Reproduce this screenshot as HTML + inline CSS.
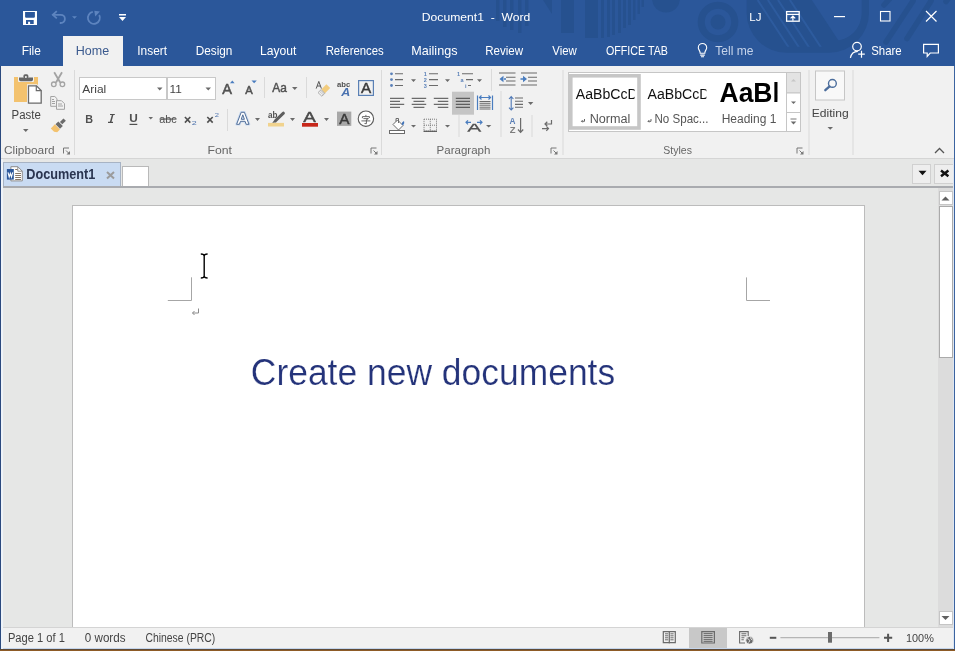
<!DOCTYPE html>
<html><head><meta charset="utf-8">
<style>
*{margin:0;padding:0;box-sizing:border-box}
html,body{width:955px;height:651px;overflow:hidden;background:#e6e7e6;font-family:"Liberation Sans",sans-serif}
.a{position:absolute}
svg text{font-family:"Liberation Sans",sans-serif;white-space:pre}

</style></head><body>
<div class="a" style="left:0;top:0;width:955px;height:66px;background:#2b579a;overflow:hidden">
<svg class="a" style="left:0;top:0" width="955" height="66">
    <g fill="#26518f">
      <rect x="496" y="0" width="3.5" height="21"/>
      <rect x="503" y="0" width="3.5" height="27"/>
      <rect x="510" y="0" width="3.5" height="30"/>
      <rect x="518" y="0" width="3.5" height="33"/>
      <rect x="525" y="0" width="3.5" height="26"/>
      <polygon points="543,0 552,0 552,14"/>
      <rect x="561" y="0" width="13" height="33"/>
      <rect x="585" y="0" width="13" height="38"/>
      <rect x="601" y="0" width="3" height="38"/>
      <rect x="607" y="0" width="3" height="37"/>
      <rect x="612" y="0" width="3" height="35"/>
      <rect x="618" y="0" width="3" height="33"/>
      <rect x="623" y="0" width="3" height="28"/>
      <rect x="628" y="0" width="3" height="25"/>
      <rect x="633" y="0" width="2.5" height="20"/>
      <rect x="637.5" y="0" width="2.5" height="14"/>
      <rect x="641.5" y="0" width="2.5" height="7"/>
      <circle cx="666" cy="-1.5" r="14"/>
      <path fill-rule="evenodd" d="M718,1.7a20.3,20.3 0 1,0 0.01,0z M718,8.7a13.3,13.3 0 1,1 -0.01,0z"/>
      <circle cx="718" cy="22" r="7.5"/>
      <g clip-path="url(#top0)">
        <path d="M746.6,0 V12.8 A40,40 0 0 0 786.6,52.8 H829 A40,40 0 0 0 869,12.8 V0 Z"/>
      </g>
    </g>
    <g clip-path="url(#inner)"><path d="M760,0 V1 A40,40 0 0 0 800,41 H833.7 A28,28 0 0 0 861.7,13 V0 Z" fill="#2b579a"/></g>
    <g clip-path="url(#lines)" stroke="#2d5b9e" stroke-width="2">
      <path d="M757.6,0 L793,54 M767.9,0 L803.3,54 M778,0 L813.4,54 M789.9,0 L825.3,54"/>
    </g>
    <g fill="#26518f">
      <g stroke="#26518f" stroke-width="5.5" stroke-linecap="round" fill="none">
      <path d="M913,1 L886,42 M931,1 L907,38.5 M893,-5 L884,5 M951,-5 L946,1.5"/>
      </g>
      </g>
    <defs>
      <clipPath id="top0"><rect x="0" y="0" width="955" height="66"/></clipPath>
      <clipPath id="inner"><polygon points="811.8,0 900,0 900,60 851.3,60"/></clipPath>
      <clipPath id="lines"><path d="M752,0 V12.8 A34,34 0 0 0 786.6,46.8 H829 A34,34 0 0 0 863,12.8 V0Z"/></clipPath>
    </defs>
    <!-- save -->
    <path fill="#fff" fill-rule="evenodd" d="M23,11 H37 V25 H23Z M25.1,12.1 V17 L25.8,17.7 H34.2 L34.9,17 V12.1Z M26,20.1 V24 H28.1 V21.8 H30.1 V24 H33.7 V20.1Z"/>
    <!-- undo -->
    <g fill="none" stroke="#5d84bf" stroke-width="1.8">
      <path d="M52.5,14.8 H60.8 A4.1,4.1 0 0 1 60.8,23 H59.8"/>
      <path d="M56.8,11.2 L52.8,14.8 L56.8,18.4"/>
    </g>
    <path d="M72,16.3 h5 l-2.5,2.5z" fill="#5d84bf"/>
    <g fill="none" stroke="#5d84bf" stroke-width="1.8">
      <path d="M92.8,11.9 A6,6 0 1 0 99.2,15"/>
    </g>
    <path d="M94.3,10.8 L99.9,11.4 L95.2,16.4 Z" fill="#5d84bf"/>
    <!-- customize -->
    <rect x="119" y="14" width="7" height="1.5" fill="#fff"/>
    <path d="M119,17 h7 l-3.5,4z" fill="#fff"/>
    <!-- ribbon display options -->
    <g fill="none" stroke="#fff" stroke-width="1.3">
      <rect x="786.6" y="11.6" width="12.6" height="9.6"/>
      <path d="M786.6,14.4 H799.2"/>
      <path d="M792.9,20.8 V16.2 M790.6,18.4 L792.9,16.1 L795.2,18.4"/>
    </g>
    <rect x="834" y="16" width="11" height="1.2" fill="#fff"/>
    <rect x="880.5" y="11.5" width="9.5" height="9.5" fill="none" stroke="#fff" stroke-width="1.1"/>
    <path d="M926,11 L936.5,21.5 M936.5,11 L926,21.5" stroke="#fff" stroke-width="1.2"/>
    <!-- bulb -->
    <g fill="none" stroke="#fff" stroke-width="1.1">
      <path d="M700.2,53.2 C700.2,50.8 698.3,49.6 698.3,47.7 A4.2,4.2 0 0 1 706.7,47.7 C706.7,49.6 704.8,50.8 704.8,53.2 Z"/>
      <path d="M700.2,55.1 H704.8 M701,56.7 H704"/>
    </g>
    <!-- share -->
    <g fill="none" stroke="#fff" stroke-width="1.2">
      <circle cx="857" cy="46.6" r="4.3"/>
      <path d="M850.4,57.8 C851.2,53.6 854.2,51.4 857.8,51.3"/>
      <path d="M858.2,54.2 H864.8 M861.5,50.8 V57.8"/>
    </g>
    <!-- comment -->
    <path d="M923.6,44.4 H938.4 V53 H930.2 L927.2,56.4 V53 H923.6 Z" fill="none" stroke="#fff" stroke-width="1.2" stroke-linejoin="miter"/>
  </svg>
<div class="a" style="left:63px;top:36px;width:60px;height:30px;background:#f1f1f1"></div>
</div>
<div class="a" style="left:0;top:66px;width:955px;height:93px;background:#f1f1f1;border-bottom:1px solid #d5d5d5"></div>
<!-- doc tab bar -->
<div class="a" style="left:0;top:159px;width:955px;height:27px;background:#e6e7e6"></div>
<div class="a" style="left:2.5px;top:162px;width:118px;height:26px;background:#c9dbf2;border:1px solid #a7b3c4;border-bottom:none"></div>
<div class="a" style="left:122px;top:166px;width:27px;height:21px;background:#fff;border:1px solid #b9b9b9;border-bottom:none"></div>
<div class="a" style="left:0;top:186px;width:955px;height:2px;background:#a9abaf"></div>
<div class="a" style="left:912px;top:164px;width:19px;height:20px;background:#eeeeee;border:1px solid #d0d0d0"></div>
<div class="a" style="left:934px;top:164px;width:20px;height:20px;background:#eeeeee;border:1px solid #d0d0d0"></div>
<!-- doc area -->
<div class="a" style="left:0;top:188px;width:955px;height:439px;background:#e6e7e6"></div>
<div class="a" style="left:72px;top:205px;width:793px;height:440px;background:#fff;border:1px solid #bcbcbc"></div>
<!-- scrollbar -->
<div class="a" style="left:938px;top:188px;width:16px;height:439px;background:#dcdcdc"></div>
<div class="a" style="left:938.5px;top:190.5px;width:14px;height:14px;background:#fff;border:1px solid #c5c5c5"></div>
<div class="a" style="left:938.5px;top:205.5px;width:14px;height:152px;background:#fff;border:1px solid #aaaaaa"></div>
<div class="a" style="left:938.5px;top:611px;width:14px;height:14px;background:#fff;border:1px solid #c5c5c5"></div>
<!-- status -->
<div class="a" style="left:0;top:627px;width:955px;height:22px;background:#f1f1f1;border-top:1px solid #d4d4d4"></div>
<div class="a" style="left:689px;top:628px;width:38px;height:20px;background:#c8c8c8"></div>
<div class="a" style="left:0;top:648px;width:955px;height:1px;background:#c4d5ec"></div>
<div class="a" style="left:0;top:649px;width:955px;height:1px;background:#5e4a36"></div>
<div class="a" style="left:0;top:650px;width:955px;height:1px;background:#8e5b26"></div>
<div class="a" style="left:0;top:66px;width:1px;height:583px;background:#2b4a7e"></div><div class="a" style="left:1px;top:159px;width:1.5px;height:490px;background:#eef3f9"></div>
<div class="a" style="left:953px;top:159px;width:1px;height:490px;background:#dde6f1"></div><div class="a" style="left:954px;top:66px;width:1px;height:583px;background:#3b63a0"></div>
<svg class="a" style="left:0;top:0;z-index:3" width="955" height="651">
<!-- doc tab icons -->
<path d="M10.9,166.7 H17.8 L22.3,171.2 V180.9 H10.9Z" fill="#fff" stroke="#8c8c8c" stroke-width="1"/>
<path d="M17.8,166.7 V171.2 H22.3" fill="none" stroke="#8c8c8c" stroke-width="1"/>
<g stroke="#857565" stroke-width="1"><path d="M15.2,169.5 H17.5 M15.2,173.5 H21 M15.2,175.5 H21 M15.2,177.5 H21 M15.2,179.5 H21"/></g>
<rect x="6.9" y="169" width="6.9" height="10.6" fill="#2b579a"/>
<path d="M8,172.3 L9.2,177 L10.35,173.3 L11.5,177 L12.7,172.3" fill="none" stroke="#fff" stroke-width="1.1"/>
<path d="M107,172 L114,178.5 M114,172 L107,178.5" stroke="#9b9b9b" stroke-width="2"/>
<path d="M918.5,170.8 h8 l-4,4.4z" fill="#111"/>
<path d="M941,170.6 L948.4,176.2 M948.4,170.6 L941,176.2" stroke="#111" stroke-width="2.5"/>
<!-- scroll arrows -->
<path d="M941.5,200.5 h8 l-4,-4z" fill="#606060"/>
<path d="M941.5,616 h8 l-4,4z" fill="#606060"/>
<!-- page marks -->
<path d="M167.8,300.5 H191.5 V277.3" fill="none" stroke="#a6a6a6" stroke-width="1"/>
<path d="M770,300.5 H746.5 V277.4" fill="none" stroke="#a6a6a6" stroke-width="1"/>
<g fill="none" stroke="#8a8a8a" stroke-width="1"><path d="M198.5,308.5 V313 H192.5 M194.5,311 L192.5,313 L194.5,315"/></g>
<g fill="none" stroke="#000" stroke-width="1.4"><path d="M204.2,254.5 V277.5 M200.8,254 Q204.2,254 204.2,256 Q204.2,254 207.6,254 M200.8,278 Q204.2,278 204.2,276 Q204.2,278 207.6,278"/></g>
<!-- status icons -->
<g fill="none" stroke="#6b6b6b" stroke-width="1.2">
<path d="M663.3,631.6 H675.3 V642.6 H663.3Z M669.3,631.6 V643.6"/>
</g>
<g stroke="#6b6b6b" stroke-width="1">
<path d="M665,633.8 H668.2 M665,635.8 H668.2 M665,637.8 H668.2 M665,639.8 H668.2 M670.4,633.8 H673.6 M670.4,635.8 H673.6 M670.4,637.8 H673.6 M670.4,639.8 H673.6"/>
<path d="M701.8,631.6 H714.4 V643 H701.8Z" fill="none" stroke-width="1.2"/>
<path d="M703.6,633.6 H712.6 M703.6,635.6 H712.6 M703.6,637.6 H712.6 M703.6,639.6 H712.6 M703.6,641.4 H712.6"/>
<path d="M748.2,636 V631.6 H739.6 V643 H745 M741.4,633.8 H746.4 M741.4,635.8 H746.4 M741.4,637.8 H744.4 M741.4,639.8 H743.8" fill="none" stroke-width="1.1"/>
</g>
<circle cx="749.6" cy="640.3" r="3.8" fill="#6b6b6b" stroke="#f1f1f1" stroke-width="0.8"/>
<path d="M747.2,638.6 Q749,638.8 749.8,640.8 L748.6,642.6 M750.6,637.4 Q750.4,639 752.4,640.2" stroke="#f1f1f1" stroke-width="0.9" fill="none"/>
<rect x="769.8" y="636.8" width="6.5" height="2" fill="#555"/>
<rect x="780.4" y="637.2" width="99" height="1" fill="#a6a6a6"/>
<rect x="828" y="632" width="4" height="10.7" fill="#6b6b6b"/>
<path d="M884,637.8 H892.2 M888.1,633.8 V642" stroke="#555" stroke-width="2"/>
</svg>

<svg class="a" style="left:0;top:0;z-index:2;will-change:transform" width="955" height="160">
<!-- ===== Clipboard ===== -->
<rect x="14" y="77" width="24" height="25" fill="#f3c26e"/>
<rect x="18" y="76" width="16" height="6" rx="1" fill="#f1f1f1"/>
<path d="M19,77.4 H33 V79.6 Q33,81.2 31.4,81.2 H20.6 Q19,81.2 19,79.6Z" fill="#666"/>
<rect x="23.4" y="74.3" width="5" height="4" rx="1.6" fill="#666"/>
<circle cx="25.9" cy="77" r="0.9" fill="#fff"/>
<path d="M27,84.3 H37 L42.7,90 V104.6 H27Z" fill="#f1f1f1"/>
<path d="M28.5,85.8 H36.5 L41.2,90.5 V103.1 H28.5Z" fill="#fff" stroke="#6b6b6b" stroke-width="1.3"/>
<path d="M36.3,85.8 V90.7 H41.2" fill="none" stroke="#6b6b6b" stroke-width="1.2"/>
<path d="M23,129 h5.5 l-2.75,3z" fill="#6b6b6b"/>
<!-- scissors -->
<g stroke="#a3a3a3" fill="none">
<path d="M54.2,72.2 L60.2,82.5 M62,72.2 L56,82.5" stroke-width="1.8"/>
<circle cx="53.8" cy="84.3" r="2.3" stroke-width="1.3"/>
<circle cx="62.4" cy="84.3" r="2.3" stroke-width="1.3"/>
</g>
<!-- copy -->
<g stroke="#a3a3a3" fill="#f1f1f1" stroke-width="1">
<path d="M50.7,96.5 H54.8 L57,98.7 V106.3 H50.7Z"/>
<path d="M56.5,100.7 H61.5 L64.5,103.7 V109.3 H56.5Z"/>
<path d="M52,99.5 H54 M52,101.5 H55 M52,103.5 H55 M58,104 H62 M58,106 H63" fill="none"/>
</g>
<!-- format painter -->
<g transform="translate(58.3,126) rotate(45)">
<path d="M-3.6,1.3 H3.6 V5.2 L1,7 H-3.6Z" fill="#f3c26e"/>
<rect x="-3.2" y="-3.2" width="6.4" height="4" fill="#6b6b6b"/>
<rect x="-1.7" y="-9" width="3.4" height="5" fill="#6b6b6b"/>
</g>
<rect x="74" y="70" width="1" height="85" fill="#dadada"/>
<path d="M63,147.6 h6.5 v6.5 M63,147.6 v6.5 h6.5" fill="none" stroke="#858585" stroke-width="0"/>
<g fill="none" stroke="#777" stroke-width="1"><path d="M63.5,153.5 V148 H69"/><path d="M66,150.5 L69.5,154"/></g><path d="M70,151 V154.5 H66.5Z" fill="#777"/>
<!-- ===== Font ===== -->
<rect x="79.5" y="77.5" width="87" height="22" fill="#fff" stroke="#c8c8c8"/>
<rect x="167.5" y="77.5" width="48" height="22" fill="#fff" stroke="#c8c8c8"/>
<path d="M157,87.5 h5.5 l-2.75,3z M205.5,87.5 h5.5 l-2.75,3z" fill="#6b6b6b"/>
<path d="M230,83.2 l2.3,-2.8 l2.3,2.8z" fill="#4a7dbf"/>
<path d="M251.5,80.5 h5.3 l-2.65,2.8z" fill="#4a7dbf"/>
<rect x="264" y="77" width="1" height="21" fill="#dadada"/>
<path d="M292,87 h5.5 l-2.75,3z" fill="#6b6b6b"/>
<rect x="306" y="77" width="1" height="21" fill="#dadada"/>
<!-- clear formatting -->
<path d="M316.2,88.6 L318.8,81.4 L321.4,88.6 M317.2,86 H320.4" fill="none" stroke="#555" stroke-width="1"/>
<path d="M321.2,89.6 L326.4,84.2 L330.2,88 L324.8,93.4Z" fill="#f2cc7e"/>
<path d="M318,92.6 L321.2,89.6 L324.8,93.4 L321.8,96.2 Z" fill="#f1f1f1" stroke="#a8a8a8" stroke-width="0.9"/>
<path d="M319.6,91.4 L323.2,94.8 M320.8,90.4 L324.2,93.9" stroke="#b0b0b0" stroke-width="0.7"/>
<!-- phonetic -->
<text x="337" y="86.8" font-size="7.4" font-weight="bold" font-family="Liberation Sans" fill="#505050" textLength="13.3" lengthAdjust="spacingAndGlyphs">abc</text>
<text x="341.3" y="95.9" font-size="10.2" font-weight="bold" font-style="italic" font-family="Liberation Sans" fill="#4a72b0" textLength="9" lengthAdjust="spacingAndGlyphs">A</text>
<!-- char border -->
<rect x="358.6" y="80.6" width="14.8" height="14.8" fill="none" stroke="#5a80b5" stroke-width="1.2"/>
<text x="361" y="93" font-size="15" font-family="Liberation Sans" fill="#3a3a3a" stroke="#3a3a3a" stroke-width="0.45" textLength="10.2" lengthAdjust="spacingAndGlyphs">A</text>
<rect x="381" y="70" width="1" height="85" fill="#dadada"/>
<!-- row2 -->
<path d="M184.9,117 L190.3,122.6 M190.3,117 L184.9,122.6 M207.3,117 L212.7,122.6 M212.7,117 L207.3,122.6" stroke="#505050" stroke-width="1.6"/>
<path d="M110,114.5 H114.8 M108,122.4 H113" stroke="#505050" stroke-width="1.1"/>
<path d="M112.7,114.6 L110.6,122.3" stroke="#505050" stroke-width="1.5"/>
<rect x="129.5" y="123.8" width="7.8" height="1.2" fill="#505050"/>
<rect x="159.5" y="118.5" width="17" height="1.1" fill="#505050"/>
<path d="M148.5,117 h4.5 l-2.25,2.6z" fill="#6b6b6b"/>
<rect x="227" y="109" width="1" height="22" fill="#dadada"/>
<path d="M241.2,112.3 H244.4 L249,124.3 H246.2 L245.1,121.3 H240.5 L239.4,124.3 H236.6Z M241.2,119.3 H244.4 L242.8,114.8Z" fill="none" stroke="#cadbf1" stroke-width="2.6" stroke-linejoin="round"/><path d="M241.2,112.3 H244.4 L249,124.3 H246.2 L245.1,121.3 H240.5 L239.4,124.3 H236.6Z M241.2,119.3 H244.4 L242.8,114.8Z" fill="#fff" fill-rule="evenodd" stroke="#536f98" stroke-width="1"/>
<path d="M255,118 h5 l-2.5,3z M290,118 h5 l-2.5,3z M324,118 h5 l-2.5,3z" fill="#6b6b6b"/>
<!-- highlight -->
<text x="268" y="117.7" font-size="8.6" font-weight="bold" font-family="Liberation Sans" fill="#505050" textLength="9.5" lengthAdjust="spacingAndGlyphs">ab</text>
<path d="M283.4,113.2 L275.6,120.6" stroke="#5e5e5e" stroke-width="3" stroke-linecap="round"/><path d="M274.2,120.2 L276.4,122.2 L272.2,123Z" fill="#5e5e5e"/>
<rect x="268" y="122.9" width="16" height="3.6" fill="#f1d38e"/>
<!-- font color -->
<text x="303.2" y="122" font-size="14" font-family="Liberation Sans" fill="#4a4a4a" stroke="#4a4a4a" stroke-width="0.4" textLength="12.6" lengthAdjust="spacingAndGlyphs">A</text>
<rect x="302" y="123" width="16" height="3.7" fill="#c7281b"/>
<!-- shading -->
<rect x="337" y="111.6" width="14.3" height="14.3" fill="#a8a8a8"/>
<text x="339.2" y="124.3" font-size="15" font-family="Liberation Sans" fill="#3a3a3a" stroke="#3a3a3a" stroke-width="0.45" textLength="10.2" lengthAdjust="spacingAndGlyphs">A</text>
<!-- enclose -->
<circle cx="365.9" cy="118.7" r="7.7" fill="#fff" stroke="#5a5a5a" stroke-width="1.1"/>
<g fill="none" stroke="#505050" stroke-width="0.85"><path d="M365.9,114.9 V116.3 M362.4,118.2 V116.6 H369.4 V118 M363.4,118.6 H368.4 L366.3,119.8 M361.4,120.9 H370.4 M366.4,119.8 V123.7 L364.5,123.5"/></g>
<g fill="none" stroke="#777" stroke-width="1"><path d="M371,153.5 V148 H376.5"/><path d="M373.5,150.5 L377,154"/></g><path d="M377.5,151 V154.5 H374Z" fill="#777"/>
<!-- ===== Paragraph ===== -->
<g fill="#5a80b8">
<circle cx="391.5" cy="73.8" r="1.4"/><circle cx="391.5" cy="79.6" r="1.4"/><circle cx="391.5" cy="85.5" r="1.4"/>
</g>
<g stroke="#6b6b6b" stroke-width="1.1"><path d="M395,73.8 H403 M395,79.6 H403 M395,85.5 H403"/></g>
<path d="M411,79.3 h5 l-2.5,2.6z M445,79.3 h5 l-2.5,2.6z M477,79.3 h5 l-2.5,2.6z" fill="#6b6b6b"/>
<g font-family="Liberation Sans" font-size="5.5" font-weight="bold" fill="#5a80b8">
<text x="423.8" y="76">1</text><text x="423.8" y="82">2</text><text x="423.8" y="88">3</text>
<text x="457" y="76">1</text><text x="460.5" y="82">a</text><text x="465" y="88">i</text>
</g>
<g stroke="#6b6b6b" stroke-width="1.1"><path d="M429,73.8 H438 M429,79.6 H438 M429,85.5 H438 M462,73.8 H473 M466,79.6 H473 M468,85.5 H471"/></g>
<rect x="491" y="69" width="1" height="22" fill="#dadada"/>
<g stroke="#6b6b6b" stroke-width="1.1"><path d="M499,73 H515.5 M506,77.3 H515.5 M506,81 H515.5 M499,85 H515.5 M521,73 H537 M528,77.3 H537 M528,81 H537 M521,85 H537"/></g>
<path d="M499.5,79 L503.5,75.8 V82.2Z M504,78.3 H506 V79.7 H504Z" fill="#4a7dbf"/>
<path d="M527,79 L523,75.8 V82.2Z M520.5,78.3 H523 V79.7 H520.5Z" fill="#4a7dbf"/>
<!-- align row -->
<g stroke="#6b6b6b" stroke-width="1.2">
<path d="M390,98.3 H404.2 M390,101.3 H400 M390,104.4 H404.2 M390,107.4 H400"/>
<path d="M411.7,98.3 H426.2 M413.5,101.3 H424.4 M411.7,104.4 H426.2 M413.5,107.4 H424.4"/>
<path d="M433.8,98.3 H448.3 M437.8,101.3 H448.3 M433.8,104.4 H448.3 M437.8,107.4 H448.3"/>
</g>
<rect x="452" y="91.7" width="22" height="23" fill="#c5c5c5"/>
<g stroke="#5e5e5e" stroke-width="1.2"><path d="M455.8,98.3 H470 M455.8,101.3 H470 M455.8,104.4 H470 M455.8,107.4 H470"/></g>
<g stroke="#4a7dbf" stroke-width="1.2" fill="none"><path d="M477.5,95.5 V110 M492.5,95.5 V110 M479.5,97.5 H490.5 M481.5,95.5 L479.5,97.5 L481.5,99.5 M488.5,95.5 L490.5,97.5 L488.5,99.5"/></g>
<g stroke="#6b6b6b" stroke-width="1"><path d="M479.5,101.5 H490.5 M479.5,103.3 H490.5 M479.5,105.2 H490.5 M479.5,107.2 H490.5 M479.5,109 H490.5"/></g>
<rect x="500.5" y="91" width="1" height="46" fill="#dadada"/>
<g stroke="#4f78b5" stroke-width="1.1" fill="none"><path d="M511.2,96.8 V109.8 M509,99 L511.2,96.6 L513.4,99 M509,107.6 L511.2,110 L513.4,107.6"/></g>
<g stroke="#6b6b6b" stroke-width="1.1"><path d="M515,98 H523 M515,101.3 H523 M515,104.4 H523 M515,107.3 H523"/></g>
<path d="M528,102 h5.3 l-2.65,3z" fill="#6b6b6b"/>
<!-- row3 shading -->
<path d="M393,124.5 L397.5,120 L403,125.5 L398.5,130 Z" fill="#fff" stroke="#6b6b6b" stroke-width="1"/>
<path d="M396,121.5 V118.5 H398.5 V123" fill="none" stroke="#6b6b6b" stroke-width="1"/>
<path d="M403,125.5 Q405,123 404,121 Q402,122 401.5,124Z" fill="#3f72b8"/>
<rect x="389.5" y="130.5" width="15" height="3" fill="#fff" stroke="#6b6b6b" stroke-width="1"/>
<path d="M411,125 h5 l-2.5,2.6z M445,125 h5 l-2.5,2.6z" fill="#6b6b6b"/>
<g fill="#888"><path d="M424,119 h13 v1 h-13z M424,124.8 h13 v1 h-13z" opacity="0"/></g>
<g stroke="#777" stroke-width="1" stroke-dasharray="1,1" fill="none"><rect x="424" y="119.2" width="12.5" height="12"/><path d="M430.25,119.2 V131.2 M424,125.2 H436.5"/></g>
<rect x="423.5" y="130.7" width="13.5" height="1.2" fill="#555"/>
<rect x="458.5" y="115" width="1" height="22" fill="#dadada"/>
<g stroke="#4a7dbf" stroke-width="1.2" fill="none"><path d="M466,122.3 H471 M468,120.3 L466,122.3 L468,124.3 M477,122.3 H482 M480,120.3 L482,122.3 L480,124.3"/></g>
<path d="M467,131.8 L472.8,123.8 H475.8 L481.5,131.8 H479 L477.6,129.6 H471 L469.6,131.8Z M472,128 H476.6 L474.3,124.8Z" fill="#555" fill-rule="evenodd"/>
<path d="M486,125 h5.3 l-2.65,2.6z" fill="#6b6b6b"/>
<rect x="501" y="115" width="1" height="22" fill="transparent"/>
<text x="509.5" y="124.3" font-size="8.6" font-weight="bold" fill="#5a7fb6" textLength="6" lengthAdjust="spacingAndGlyphs">A</text>
<text x="509.7" y="132.7" font-size="8.6" font-weight="bold" fill="#7d7d7d" textLength="5.8" lengthAdjust="spacingAndGlyphs">Z</text>
<g stroke="#6b6b6b" stroke-width="1.2" fill="none"><path d="M520.6,118 V132.3 M518,129.5 L520.6,132.3 L523.2,129.5"/></g>
<rect x="531.5" y="115" width="1" height="22" fill="#dadada"/>
<g stroke="#6b6b6b" stroke-width="1.2" fill="none"><path d="M551.5,120 V124 H545 M547.3,121.8 L545,124 L547.3,126.2 M542,128.6 H548.5 M546.3,126.4 L548.5,128.6 L546.3,130.8"/></g>
<g fill="none" stroke="#777" stroke-width="1"><path d="M551,153.5 V148 H556.5"/><path d="M553.5,150.5 L557,154"/></g><path d="M557.5,151 V154.5 H554Z" fill="#777"/>
<rect x="562.5" y="70" width="1" height="85" fill="#dadada"/>
<!-- ===== Styles ===== -->
<rect x="568.5" y="72.5" width="232" height="59" fill="#fff" stroke="#c6c6c6"/>
<rect x="570.8" y="75.8" width="68.2" height="52.2" fill="none" stroke="#c6c6c6" stroke-width="3.6"/>
<rect x="786.5" y="72.5" width="14" height="20.5" fill="#e3e3e3" stroke="#c6c6c6"/>
<rect x="786.5" y="93" width="14" height="19.5" fill="#fff" stroke="#c6c6c6"/>
<rect x="786.5" y="112.5" width="14" height="19" fill="#fff" stroke="#c6c6c6"/>
<path d="M791,81.5 h5 l-2.5,-2.5z" fill="#c6c6c6"/>
<path d="M791,101.5 h5 l-2.5,2.6z" fill="#6b6b6b"/>
<path d="M790.5,119 h6" stroke="#6b6b6b" stroke-width="0.9"/><path d="M790.7,121.5 h5.6 l-2.8,3z" fill="#6b6b6b"/>
<g fill="none" stroke="#555" stroke-width="0.9"><path d="M584.5,119 V121.3 H581.5 M582.6,120.2 L581.5,121.3 L582.6,122.4"/><path d="M651,119 V121.3 H648 M649.1,120.2 L648,121.3 L649.1,122.4"/></g>
<g fill="none" stroke="#777" stroke-width="1"><path d="M797,153.5 V148 H802.5"/><path d="M799.5,150.5 L803,154"/></g><path d="M803.5,151 V154.5 H800Z" fill="#777"/>
<rect x="808.5" y="70" width="1" height="85" fill="#dadada"/>
<!-- editing -->
<rect x="815.5" y="71" width="29" height="29" fill="#f8f8f8" stroke="#c6c6c6"/>
<circle cx="832.4" cy="83.4" r="3.9" fill="none" stroke="#4b6d9c" stroke-width="1.4"/>
<path d="M829.6,86.4 L825.3,90.2" stroke="#4b6d9c" stroke-width="2.3" stroke-linecap="round"/>
<path d="M827.5,127 h5.5 l-2.75,2.8z" fill="#6b6b6b"/>
<rect x="852.5" y="70" width="1" height="85" fill="#dadada"/>
<path d="M935,153 L939.5,148.5 L944,153" fill="none" stroke="#555" stroke-width="1.3"/>
</svg>

<svg class="a" style="left:0;top:0;z-index:5;will-change:transform" width="955" height="651">
<text x="421.80" y="20.80" font-size="11.73" font-weight="normal" fill="#ffffff" textLength="108.41" lengthAdjust="spacingAndGlyphs">Document1  -  Word</text>
<text x="749.31" y="20.50" font-size="11.45" font-weight="normal" fill="#ffffff" textLength="12.12" lengthAdjust="spacingAndGlyphs">LJ</text>
<text x="21.66" y="54.90" font-size="12.29" font-weight="normal" fill="#ffffff" textLength="19.23" lengthAdjust="spacingAndGlyphs">File</text>
<text x="75.76" y="55.10" font-size="12.29" font-weight="normal" fill="#3b5a8e" textLength="33.41" lengthAdjust="spacingAndGlyphs">Home</text>
<text x="137.26" y="55.10" font-size="12.29" font-weight="normal" fill="#ffffff" textLength="29.82" lengthAdjust="spacingAndGlyphs">Insert</text>
<text x="195.66" y="55.10" font-size="12.29" font-weight="normal" fill="#ffffff" textLength="36.74" lengthAdjust="spacingAndGlyphs">Design</text>
<text x="259.96" y="55.10" font-size="12.29" font-weight="normal" fill="#ffffff" textLength="36.36" lengthAdjust="spacingAndGlyphs">Layout</text>
<text x="325.66" y="55.10" font-size="12.29" font-weight="normal" fill="#ffffff" textLength="58.12" lengthAdjust="spacingAndGlyphs">References</text>
<text x="411.26" y="55.10" font-size="12.29" font-weight="normal" fill="#ffffff" textLength="46.20" lengthAdjust="spacingAndGlyphs">Mailings</text>
<text x="485.26" y="55.10" font-size="12.29" font-weight="normal" fill="#ffffff" textLength="37.84" lengthAdjust="spacingAndGlyphs">Review</text>
<text x="552.26" y="55.10" font-size="12.29" font-weight="normal" fill="#ffffff" textLength="24.51" lengthAdjust="spacingAndGlyphs">View</text>
<text x="605.96" y="55.10" font-size="12.29" font-weight="normal" fill="#ffffff" textLength="62.00" lengthAdjust="spacingAndGlyphs">OFFICE TAB</text>
<text x="715.26" y="55.10" font-size="12.29" font-weight="normal" fill="#c5d3ea" textLength="38.23" lengthAdjust="spacingAndGlyphs">Tell me</text>
<text x="871.26" y="55.10" font-size="12.29" font-weight="normal" fill="#ffffff" textLength="30.47" lengthAdjust="spacingAndGlyphs">Share</text>
<text x="11.53" y="118.70" font-size="12.85" font-weight="normal" fill="#444444" textLength="29.24" lengthAdjust="spacingAndGlyphs">Paste</text>
<text x="4.01" y="154.00" font-size="11.45" font-weight="normal" fill="#666666" textLength="50.70" lengthAdjust="spacingAndGlyphs">Clipboard</text>
<text x="207.51" y="153.80" font-size="11.45" font-weight="normal" fill="#666666" textLength="24.51" lengthAdjust="spacingAndGlyphs">Font</text>
<text x="436.61" y="153.50" font-size="11.45" font-weight="normal" fill="#666666" textLength="53.79" lengthAdjust="spacingAndGlyphs">Paragraph</text>
<text x="663.31" y="153.70" font-size="11.45" font-weight="normal" fill="#666666" textLength="28.60" lengthAdjust="spacingAndGlyphs">Styles</text>
<text x="811.70" y="117.00" font-size="11.73" font-weight="normal" fill="#444444" textLength="36.92" lengthAdjust="spacingAndGlyphs">Editing</text>
<text x="82.33" y="92.80" font-size="11.17" font-weight="normal" fill="#444444" textLength="23.94" lengthAdjust="spacingAndGlyphs">Arial</text>
<text x="169.53" y="92.80" font-size="11.17" font-weight="normal" fill="#444444" textLength="12.33" lengthAdjust="spacingAndGlyphs">11</text>
<clipPath id="cp_s1"><rect x="0" y="0" width="634.6" height="651"/></clipPath>
<text x="575.80" y="98.50" font-size="14.39" font-weight="normal" fill="#111111" clip-path="url(#cp_s1)" textLength="69.80" lengthAdjust="spacingAndGlyphs">AaBbCcDd</text>
<text x="589.68" y="123.00" font-size="12.01" font-weight="normal" fill="#555555" textLength="40.68" lengthAdjust="spacingAndGlyphs">Normal</text>
<clipPath id="cp_s2"><rect x="0" y="0" width="706.4" height="651"/></clipPath>
<text x="647.60" y="98.50" font-size="14.39" font-weight="normal" fill="#111111" clip-path="url(#cp_s2)" textLength="69.80" lengthAdjust="spacingAndGlyphs">AaBbCcDd</text>
<text x="654.48" y="123.00" font-size="12.01" font-weight="normal" fill="#555555" textLength="54.05" lengthAdjust="spacingAndGlyphs">No Spac...</text>
<clipPath id="cp_s3"><rect x="0" y="0" width="777.5" height="651"/></clipPath>
<text x="719.50" y="101.50" font-size="27.23" font-weight="bold" fill="#000000" clip-path="url(#cp_s3)" textLength="88.30" lengthAdjust="spacingAndGlyphs">AaBbC</text>
<text x="721.68" y="123.00" font-size="12.01" font-weight="normal" fill="#555555" textLength="54.68" lengthAdjust="spacingAndGlyphs">Heading 1</text>
<text x="26.36" y="178.90" font-size="13.97" font-weight="bold" fill="#2a3550" textLength="69.01" lengthAdjust="spacingAndGlyphs">Document1</text>
<text x="250.84" y="384.80" font-size="36.03" font-weight="normal" fill="#24337a" stroke="#ffffff" stroke-width="0.22" textLength="364.31" lengthAdjust="spacingAndGlyphs">Create new documents</text>
<text x="7.89" y="642.20" font-size="11.87" font-weight="normal" fill="#444444" textLength="56.97" lengthAdjust="spacingAndGlyphs">Page 1 of 1</text>
<text x="84.79" y="642.20" font-size="11.87" font-weight="normal" fill="#444444" textLength="40.72" lengthAdjust="spacingAndGlyphs">0 words</text>
<text x="145.49" y="642.20" font-size="11.87" font-weight="normal" fill="#444444" textLength="69.77" lengthAdjust="spacingAndGlyphs">Chinese (PRC)</text>
<text x="906.02" y="642.30" font-size="11.31" font-weight="normal" fill="#444444" textLength="27.83" lengthAdjust="spacingAndGlyphs">100%</text>
<text x="85.31" y="122.60" font-size="11.45" font-weight="bold" fill="#505050" textLength="7.78" lengthAdjust="spacingAndGlyphs">B</text>
<text x="129.34" y="122.30" font-size="11.03" font-weight="bold" fill="#505050" textLength="8.55" lengthAdjust="spacingAndGlyphs">U</text>
<text x="159.35" y="123.00" font-size="10.89" font-weight="normal" fill="#505050" textLength="17.38" lengthAdjust="spacingAndGlyphs">abc</text>
<text x="191.87" y="124.60" font-size="5.45" font-weight="normal" fill="#4f74ae" textLength="4.96" lengthAdjust="spacingAndGlyphs">2</text>
<text x="214.68" y="116.80" font-size="5.31" font-weight="normal" fill="#4f74ae" textLength="4.26" lengthAdjust="spacingAndGlyphs">2</text>
<text x="222.16" y="94.00" font-size="13.97" font-weight="normal" fill="#505050" stroke="#505050" stroke-width="0.5" textLength="9.73" lengthAdjust="spacingAndGlyphs">A</text>
<text x="245.31" y="94.00" font-size="11.45" font-weight="normal" fill="#505050" stroke="#505050" stroke-width="0.5" textLength="7.50" lengthAdjust="spacingAndGlyphs">A</text>
<text x="272.25" y="92.00" font-size="12.57" font-weight="normal" fill="#505050" stroke="#505050" stroke-width="0.45" textLength="14.57" lengthAdjust="spacingAndGlyphs">Aa</text>
</svg>
</body></html>
